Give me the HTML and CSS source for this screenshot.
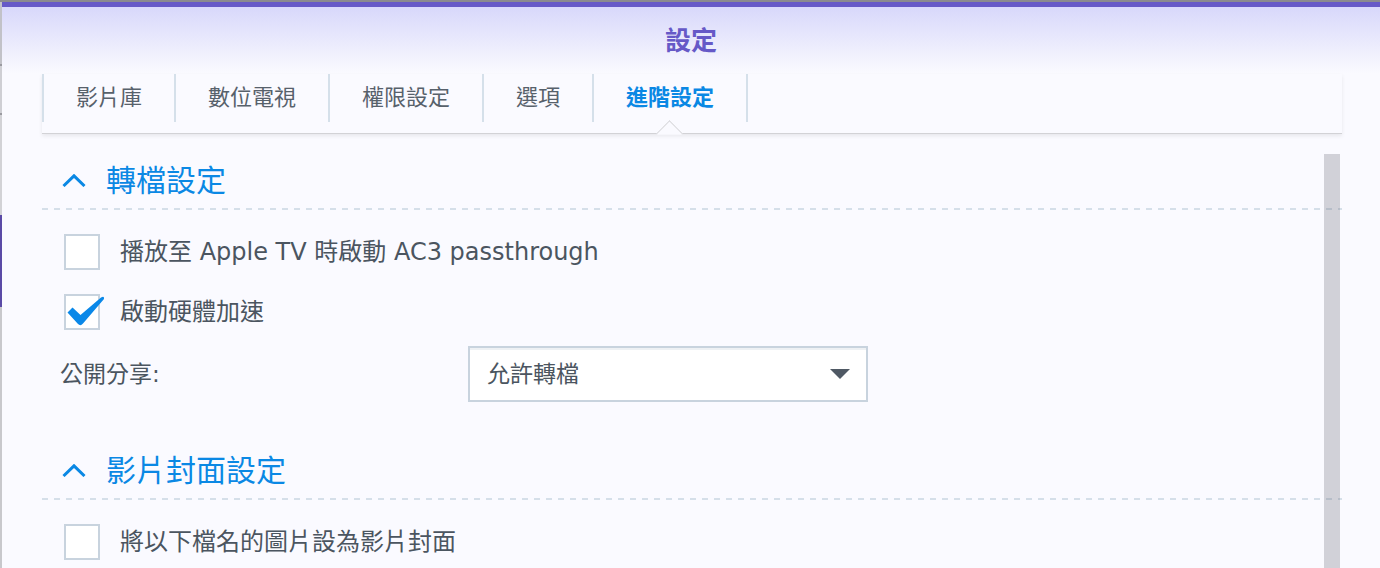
FILE: index.html
```html
<!DOCTYPE html>
<html lang="zh-Hant">
<head>
  <meta charset="UTF-8" />
  <meta name="viewport" content="width=device-width, initial-scale=1" />
  <title>設定</title>
  <link rel="stylesheet" href="styles.css">
</head>
<body>
  <div class="screen">
    <div class="edge"></div>
    <div class="window">
      <div class="titlebar">
        <h1>設定</h1>
      </div>

      <div class="tabbar">
        <div class="tab">影片庫</div>
        <div class="tab">數位電視</div>
        <div class="tab">權限設定</div>
        <div class="tab">選項</div>
        <div class="tab active">進階設定</div>
      </div>

      <div class="content">
        <section class="group">
          <div class="group-head">
            <svg class="chevron" width="24" height="13" viewBox="0 0 24 13"><polyline points="1.5,12 12,1.8 22.5,12" /></svg>
            <span>轉檔設定</span>
          </div>
          <div class="group-body">
            <label class="check-row">
              <span class="box"></span>
              <span class="text">播放至 Apple TV 時啟動 AC3 passthrough</span>
            </label>
            <label class="check-row">
              <span class="box">
                <svg class="tick" width="44" height="36" viewBox="0 0 44 36"><path d="M3.5 18.5 L8.5 13.5 L16.5 21 L37 3.5 Q40.5 1.5 40 5 L19 29.5 Q16.5 32.5 14 30 Z" /></svg>
              </span>
              <span class="text">啟動硬體加速</span>
            </label>
            <div class="field-row">
              <span class="field-label">公開分享:</span>
              <div class="select">
                <span class="text">允許轉檔</span>
                <span class="caret"></span>
              </div>
            </div>
          </div>
        </section>

        <section class="group">
          <div class="group-head">
            <svg class="chevron" width="24" height="13" viewBox="0 0 24 13"><polyline points="1.5,12 12,1.8 22.5,12" /></svg>
            <span>影片封面設定</span>
          </div>
          <div class="group-body">
            <label class="check-row">
              <span class="box"></span>
              <span class="text">將以下檔名的圖片設為影片封面</span>
            </label>
          </div>
        </section>
      </div>

      <div class="scrollbar"></div>
    </div>
  </div>
</body>
</html>
```

FILE: styles.css
```css
html, body {
  margin: 0;
  height: 568px;
  overflow: hidden;
}
body {
  font-family: "DejaVu Sans", "Noto Sans CJK TC", sans-serif;
  background: #fafaff;
  color: #4b5560;
}
.screen {
  display: flex;
  height: 566px;
  border-top: 2px solid #8a8a8e;
}
.edge {
  width: 2px;
  flex: none;
  background: linear-gradient(#c2c2c8 0, #c2c2c8 62px, #9a9aa0 62px, #9a9aa0 64px,
    #cfcfd4 64px, #cfcfd4 111px, #9a9aa0 111px, #9a9aa0 113px,
    #d2d2d6 113px, #d2d2d6 213px, #5a4aa6 213px, #5a4aa6 305px,
    #c8c8cc 305px);
}
.window {
  flex: 1;
  position: relative;
  background: #fafaff;
}
.titlebar {
  height: 67px;
  border-top: 5px solid #6659c7;
  background: linear-gradient(#d8d8fb, #f0f0fd 70%, #fafaff);
  display: flex;
  justify-content: center;
  align-items: center;
}
.titlebar h1 {
  margin: 0;
  font-size: 26px;
  font-weight: bold;
  color: #6659c7;
  line-height: 30px;
}
.tabbar {
  display: flex;
  align-items: flex-start;
  height: 59px;
  margin: 0 38px 0 40px;
  border-bottom: 1px solid #d2d2d6;
  box-shadow: 0 2px 4px rgba(0, 0, 0, 0.08);
}
.tab {
  position: relative;
  height: 48px;
  line-height: 48px;
  padding: 0 32px;
  font-size: 22px;
  color: #57616b;
  border-left: 2px solid #d5e0ea;
}
.tab.active {
  color: #0a88e4;
  font-weight: bold;
  border-right: 2px solid #d5e0ea;
}
.tab.active::after {
  content: "";
  position: absolute;
  left: 50%;
  top: 50px;
  width: 18px;
  height: 18px;
  margin-left: -10px;
  background: #fafaff;
  border-top: 1px solid #d2d2d6;
  border-left: 1px solid #d2d2d6;
  transform: rotate(45deg);
  clip-path: polygon(0 0, 100% 0, 100% 10%, 10% 100%, 0 100%);
}
.content {
  margin: 0 38px 0 40px;
  padding-top: 18px;
}
.group-head {
  display: flex;
  align-items: center;
  gap: 20px;
  height: 56px;
  padding: 0 0 2px 20px;
  background: linear-gradient(to right, #d5dfe9 50%, transparent 50%) repeat-x left bottom / 12px 2px;
  font-size: 30px;
  color: #0a88e4;
}
.group-head span {
  line-height: 34px;
  padding-top: 1px;
}
.chevron polyline {
  fill: none;
  stroke: #0a88e4;
  stroke-width: 3;
}
.group-body {
  padding: 24px 0 40px 0;
}
.check-row {
  display: flex;
  align-items: center;
  gap: 20px;
  height: 36px;
  padding-left: 22px;
  font-size: 24px;
  color: #4b5560;
}
.check-row + .check-row {
  margin-top: 24px;
}
.text {
  line-height: 30px;
  margin-bottom: 1px;
}
.box {
  position: relative;
  flex: none;
  width: 36px;
  height: 36px;
  box-sizing: border-box;
  border: 2px solid #c8d3de;
  background: #fff;
}
.tick {
  position: absolute;
  left: -2px;
  top: -2px;
  overflow: visible;
}
.tick path {
  fill: #0a88e8;
}
.field-row {
  display: flex;
  align-items: center;
  margin-top: 16px;
  padding-left: 18px;
}
.field-label {
  width: 408px;
  font-size: 23px;
  line-height: 30px;
  margin-bottom: 1px;
}
.select {
  display: flex;
  align-items: center;
  justify-content: space-between;
  box-sizing: border-box;
  width: 400px;
  height: 56px;
  padding: 0 16px 0 17px;
  border: 2px solid #c8d3de;
  background: #fff;
  box-shadow: inset 0 2px 0 #eef1f4;
  font-size: 23px;
}
.caret {
  width: 0;
  height: 0;
  border-left: 10px solid transparent;
  border-right: 10px solid transparent;
  border-top: 10px solid #4f5964;
}
.scrollbar {
  position: absolute;
  left: 1322px;
  top: 152px;
  bottom: 0;
  width: 16px;
  background: rgba(98, 100, 110, 0.27);
}
```
